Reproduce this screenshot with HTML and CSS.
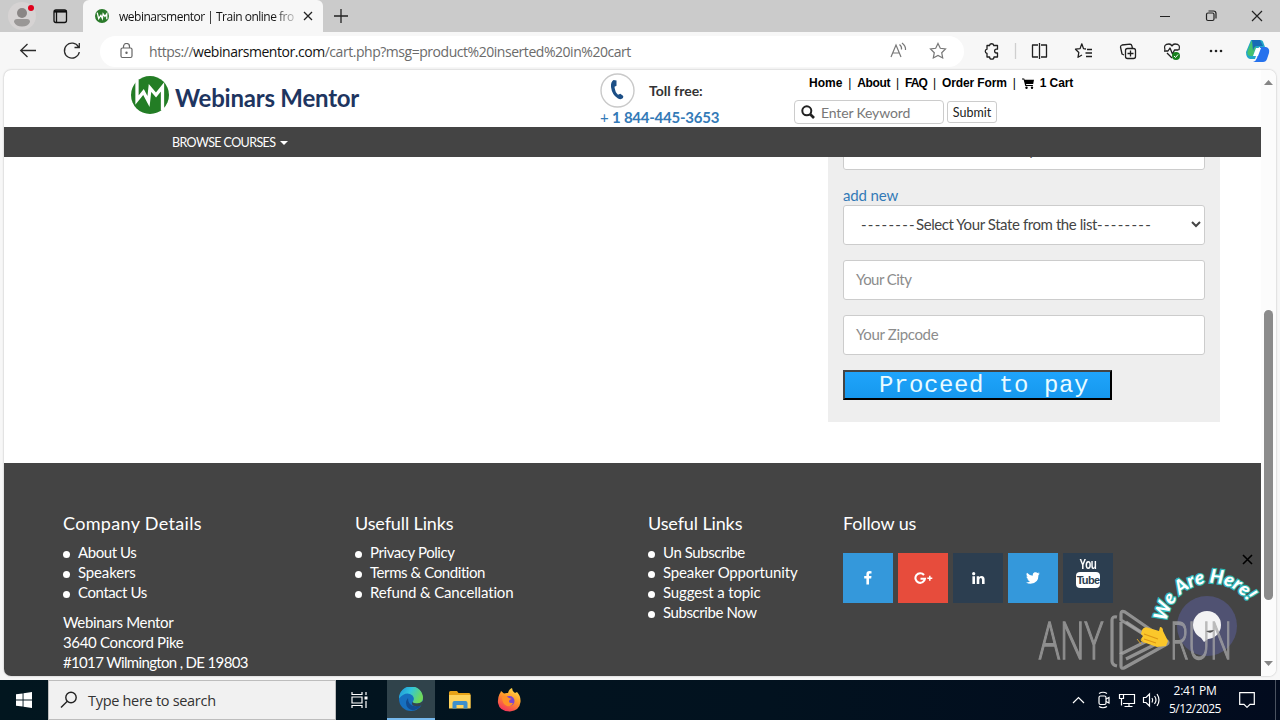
FILE: index.html
```html
<!DOCTYPE html>
<html lang="en">
<head>
<meta charset="utf-8">
<title>webinarsmentor | Train online from home</title>
<link rel="stylesheet" href="styles.css">
</head>
<body>
<div class="screen">
  <div class="titlebar">
    <svg class="tb-left" width="83" height="32" viewBox="0 0 83 32">
      <circle cx="22" cy="16" r="14" fill="#d6d3d3"/>
      <circle cx="22" cy="13" r="5" fill="#8a8685"/><path d="M14 22q0-3 3-3h10q3 0 3 3q-2 4.500-8 4.500t-8-4.500z" fill="#9a9796"/>
      <circle cx="31" cy="8" r="3" fill="#e0001b"/>
      <rect x="54" y="10" width="12.500" height="12.500" rx="2" fill="none" stroke="#111" stroke-width="1.300"/><path d="M54 11.500h12.500" stroke="#111" stroke-width="2.200"/><path d="M56.500 11v11" stroke="#111" stroke-width="1.300"/>
    </svg>
    <div class="tab">
      <svg width="14" height="14" viewBox="0 0 38 38"><circle cx="19" cy="19" r="19" fill="#2a7a2a"/><path d="M6 10l4 16 6-9 4 9 2-13 5 7 5-7v15" fill="none" stroke="#fff" stroke-width="3.500"/></svg>
      <span class="tab-title">webinarsmentor | Train online fro</span>
      <svg class="tab-x" width="10" height="10" viewBox="0 0 10 10"><path d="M1 1l8 8M9 1l-8 8" stroke="#222" stroke-width="1.300"/></svg>
    </div>
    <svg class="plus" width="14" height="14" viewBox="0 0 14 14"><path d="M7 0v14M0 7h14" stroke="#222" stroke-width="1.300"/></svg>
    <svg class="win" width="120" height="32" viewBox="0 0 120 32" fill="none" stroke="#222" stroke-width="1.200">
      <path d="M0 16.500h10M92 11l10 10M102 11l-10 10"/><rect x="46.500" y="13" width="7.500" height="7.500" rx="1.500"/><path d="M48.500 11h5q2.500 0 2.500 2.500v5"/>
    </svg>
  </div>

  <div class="toolbar">
    <svg width="100" height="38" viewBox="0 32 100 38" fill="none" stroke="#2b2b2b" stroke-width="1.300">
      <path d="M36 50.500H21M27.500 44l-6.800 6.500 6.800 6.500"/><path d="M78.500 47a7.500 7.500 0 1 0 .8 5M79.300 43v4.500h-4.800"/>
    </svg>
    <div class="address">
      <svg width="13" height="16" viewBox="0 0 13 16" fill="none" stroke="#666" stroke-width="1.200"><rect x="1" y="5" width="11" height="9.500" rx="1.500"/><path d="M3.500 5V3.500a3 3 0 0 1 6 0V5"/><circle cx="6.500" cy="9.700" r=".6" fill="#666"/></svg>
      <span class="url">https://<b>webinarsmentor.com</b>/cart.php?msg=product%20inserted%20in%20cart</span>
      <svg class="addr-icons" width="60" height="20" viewBox="888 41 60 20" fill="none" stroke="#777" stroke-width="1.200"><path d="M891 57l5-12 5 12M892.800 53h6.400M899.500 44.500q2.500 2 2 5M902 43q4 3 3.500 7"/><path d="M938 43.500l2.300 4.800 5.200.7-3.800 3.700 1 5.300-4.700-2.500-4.700 2.500 1-5.300-3.800-3.700 5.200-.7z"/></svg>
    </div>
    <svg class="tools" width="316" height="38" viewBox="964 32 316 38" fill="none" stroke="#1f1f1f" stroke-width="1.300" stroke-linejoin="round">
      <path d="M987 45.500h2.500a2.200 2.200 0 0 1 4.300 0h3.700v3.700h-1a1.900 1.900 0 0 0 0 3.800h1v4h-3.500a2.200 2.200 0 0 1-4.400 0H987v-3.500a2.200 2.200 0 0 1 0-4.300z"/>
      <path d="M1015.500 43v16" stroke="#cfcfcf"/>
      <path d="M1038 45h-5.500v12h5.500M1041 45h5.500v12h-5.500M1039.500 43v16"/>
      <path d="M1086 49l-2.500-.4-1.700-4.800-1.700 4.800-4.600.6 3.300 3.300-.8 4.800 4-2.300M1087 49.500h5M1085.500 53h6.500M1086 56.500h6"/>
      <path d="M1124 55l-2-1-1.500-7q0-1.500 1.500-2l8-.8q1.500 0 2 2l.3 2"/><rect x="1125.500" y="48.500" width="10" height="10" rx="2"/><path d="M1130.500 50.500v6M1127.500 53.500h6"/>
      <path d="M1165 50q-2-6 4-6 2 0 3 2 1-2 3-2 6 0 4 6M1164 51h4l2-3 2.500 6 2-4h4M1167 53l5 5"/><circle cx="1176" cy="56" r="4" fill="#17801c" stroke="none"/><path d="M1174 56l1.500 1.500 2.500-3" stroke="#fff" stroke-width="1"/>
      <g fill="#222" stroke="none"><circle cx="1211" cy="51" r="1.300"/><circle cx="1216" cy="51" r="1.300"/><circle cx="1221" cy="51" r="1.300"/></g>
      <g stroke="none"><path d="M1251 40h9q3 0 3.500 3l1.500 4h-6l-4 12h-5q-4-1-4-7z" fill="#21a7c9"/><path d="M1248 50l3-8q1-2 3-2h4l-5 16h-3q-4-1-2-6z" fill="#45c16f"/><path d="M1260 47h6q4 1 3 6l-2 6q-1 3-4 3h-10q3-1 4-4z" fill="#2672ed"/><path d="M1252 40h8l3 6h-6q-3 0-4 5z" fill="#176bb6"/><path d="M1256 48h5l-3 8h-5z" fill="#fff"/></g>
    </svg>
  </div>

  <div class="window">
    <div class="page">
      <header class="site-head">
        <div class="brand">
          <svg width="38" height="38" viewBox="0 0 38 38"><circle cx="19" cy="19" r="19" fill="#237d25"/><path d="M6 4v20l6.500-8 5 9.500L19 12l6 7 6.500-8v23" fill="none" stroke="#fff" stroke-width="3.300"/></svg>
          <span class="brand-name">Webinars Mentor</span>
        </div>
        <div class="phone">
          <div class="phone-top">
            <svg width="35" height="35" viewBox="0 0 35 35"><circle cx="17.500" cy="17.500" r="16.500" fill="#fff" stroke="#c9c9c9" stroke-width="1.400"/><path d="M16.500 7.500l-3-.5q-3 2-2.500 7 1 8 7 11.500 3 1.500 5-.5l.3-2-3-2.300-2.300 1q-3-2.500-3.500-8l2-1z" fill="#1c4f86"/></svg>
            <span class="toll">Toll free:</span>
          </div>
          <span class="number">+ <b>1 844-445-3653</b></span>
        </div>
        <div class="head-right">
          <nav class="menu"><a>Home</a><i>|</i><a class="m-about">About</a><i>|</i><a class="m-faq">FAQ</a><i>|</i><a class="m-order">Order Form</a><i>|</i>
            <svg width="12" height="11" viewBox="0 0 12 11"><path d="M0 .5h2.200l.4 1.300H12L11.200 6H4l.3 1.100h6.600v1H3.300L1.600 1.600H0z" fill="#000"/><circle cx="4.500" cy="9.700" r="1.200"/><circle cx="10" cy="9.700" r="1.200"/></svg><a class="m-cart">1 Cart</a></nav>
          <div class="search">
            <div class="search-box"><svg width="14" height="14" viewBox="0 0 14 14" fill="none" stroke="#222" stroke-width="2"><circle cx="5.800" cy="5.800" r="4.500"/><path d="M9 9l4 4" stroke-width="2.600"/></svg><span>Enter Keyword</span></div>
            <div class="submit">Submit</div>
          </div>
        </div>
      </header>
      <div class="navbar"><span>BROWSE COURSES</span><i class="caret"></i></div>
      <main class="main">
        <div class="form">
          <div class="field country"><span>--------Select Your Country from the list--------</span></div>
          <a class="add">add new</a>
          <div class="field select"><span class="dash">--------</span><span class="state">Select Your State from the list</span><span class="dash">--------</span><svg width="10" height="7" viewBox="0 0 10 7"><path d="M1 1l4 4 4-4" fill="none" stroke="#444" stroke-width="2"/></svg></div>
          <div class="field"><span class="city">Your City</span></div>
          <div class="field"><span class="zip">Your Zipcode</span></div>
          <div class="pay">Proceed to pay</div>
        </div>
      </main>
      <footer class="footer">
        <section class="c1"><h4>Company Details</h4>
          <ul><li>About Us</li><li class="loose">Speakers</li><li>Contact Us</li></ul>
          <p>Webinars Mentor<br>3640 Concord Pike<br><span class="addr3">#1017 Wilmington , DE 19803</span></p></section>
        <section class="c2"><h4>Usefull Links</h4>
          <ul><li>Privacy Policy</li><li>Terms &amp; Condition</li><li class="loose">Refund &amp; Cancellation</li></ul></section>
        <section class="c3"><h4>Useful Links</h4>
          <ul><li>Un Subscribe</li><li class="loose">Speaker Opportunity</li><li class="loose">Suggest a topic</li><li>Subscribe Now</li></ul></section>
        <section class="c4"><h4>Follow us</h4>
          <div class="social">
            <div class="sq blue"><svg width="8" height="14" viewBox="0 0 8 14"><path d="M7.500.2v2.300H6q-1 0-1 1V5h2.500l-.3 2.400H5V13.500H2.400V7.400H.2V5h2.200V3.200Q2.400.2 5.500.1z" fill="#fff"/></svg></div>
            <div class="sq red"><svg width="19" height="13" viewBox="0 0 19 13"><path d="M10 3A4.800 4.800 0 1 0 11 6.700H6.500" fill="none" stroke="#fff" stroke-width="2.100"/><path d="M15.800 3.800v5M13.300 6.300h5" stroke="#fff" stroke-width="1.500"/></svg></div>
            <div class="sq navy"><svg width="13" height="12" viewBox="0 0 13 12" fill="#fff"><circle cx="1.700" cy="1.700" r="1.600"/><path d="M.4 4.200H3V12H.4zM4.700 4.200h2.500v1.100Q8 4 9.600 4q3 0 3 3.500V12H10V7.900q0-1.800-1.300-1.800T7.300 8v4H4.700z"/></svg></div>
            <div class="sq blue"><svg width="14" height="12" viewBox="0 0 14 12"><path d="M14 1.500l-1.500 1.600Q12.500 11.500 4.600 11.700 2 11.700 0 10.500q2.500 0 4-1.200-2-.3-2.600-2h1.200Q.5 6.500.4 4.400l1.300.3Q-.3 3 1 .8q2.400 2.700 5.800 3Q6.300 1.200 8.600.3q1.800-.5 3 .7l1.800-.6-1.100 1.500z" fill="#fff"/></svg></div>
            <div class="sq navy yt"><span>You</span><b>Tube</b></div>
          </div></section>
      </footer>
      <svg class="chat" width="232" height="130" viewBox="1029 545 232 130">
        <defs><path id="arc" d="M1166.500 623A45 45 0 0 1 1251.500 609"/></defs>
        <path d="M1243 556l9 9M1252 556l-9 9" stroke="#000" stroke-width="1.600"/>
        <circle cx="1207" cy="627" r="30" fill="#505272"/>
        <circle cx="1207" cy="626" r="14" fill="#f3f3f4"/><path d="M1199 636l5 7 8-6z" fill="#f3f3f4"/>
        <g class="anyrun"><text x="1039" y="660" textLength="64" lengthAdjust="spacingAndGlyphs">ANY</text>
        <text x="1170" y="660" textLength="62" lengthAdjust="spacingAndGlyphs">RUN</text></g>
        <path d="M1206 632q5 4 8-1z" fill="#555"/>
        <g fill="none" stroke="#a5a5a5" stroke-opacity=".8" stroke-width="3.200" stroke-linejoin="round"><path d="M1117 618q-5-1-5 3v41q0 4 5 5"/><path d="M1121 615q0-4 4-2l42 29q2 2 0 3l-43 24q-3 1-3-2v-12l30-15-30-19z"/><path d="M1121 623v32M1126 660l32-16-32-21"/></g>
        <path d="M1142 631q2-4 7-2l10 3 1-4q3 0 3 4l5 10-2 5-9 1-14-5q-3-1-2-3l2-3-2-2z" fill="#fbc72b"/><path d="M1144 635l14 5M1144 640l12 4" stroke="#dc9616" stroke-width="1.200"/><path d="M1137 640l4 5M1141 640l3 4" stroke="#d7a52c"/>
        <text class="we"><textPath href="#arc" textLength="107" lengthAdjust="spacingAndGlyphs">We Are Here!</textPath></text>
      </svg>
    </div>
    <div class="scroll">
      <svg width="15" height="606" viewBox="0 0 15 606" fill="#858585"><path d="M3 15l4.500-5 4.500 5z"/><rect x="3" y="240" width="9" height="290" rx="4.500" fill="#8b8b8b"/><path d="M3 591l4.500 5 4.500-5z"/></svg>
    </div>
  </div>

  <div class="taskbar">
    <div class="start"><svg width="16" height="16" viewBox="0 0 16 16" fill="#fff"><path d="M0 2.300l6.600-.9v6.100H0zM7.500 1.200L16 0v7.500H7.500zM0 8.400h6.600v6.200L0 13.700zM7.500 8.400H16V16l-8.500-1.200z"/></svg></div>
    <div class="find"><svg width="18" height="18" viewBox="0 0 18 18" fill="none" stroke="#222" stroke-width="1.400"><circle cx="11" cy="6.500" r="5.200"/><path d="M7.300 10.300L1 16.500"/></svg><span>Type here to search</span></div>
    <div class="apps">
      <div class="app"><svg width="18" height="16" viewBox="0 0 18 16" fill="none" stroke="#fff" stroke-width="1.200"><path d="M1 0v2.500h10V0M1 16v-2.500h10V16M1 5h10v6H1zM15 0v3M15 9v7"/><path d="M13.500 4.500h3v3h-3z" fill="#fff" stroke="none"/></svg></div>
      <div class="app active"><svg width="24" height="24" viewBox="0 0 24 24"><defs><linearGradient id="eg" x1="0" y1="0" x2="1" y2=".4"><stop offset="0" stop-color="#1c8fd8"/><stop offset=".5" stop-color="#31c5dc"/><stop offset="1" stop-color="#6fd95a"/></linearGradient></defs><circle cx="12" cy="12" r="12" fill="#1670c0"/><path d="M0 11.500A12 12 0 0 1 24 11q0 5-5.500 5.500-5 .3-4.500-2 2-3-.5-6Q7 3.500 0 11.500z" fill="url(#eg)"/><path d="M9 11q-4 5 0 10 4 4 10 .5 2-1.500 3-4-5 3-9 1T9 11z" fill="#124c91"/><path d="M14 14.500q-1 2 4 2 4-.2 5.600-2.500l.5 1.500-1.600 3q-5 1.500-8.500 0-2-2 0-4z" fill="#34454d"/></svg></div>
      <div class="app"><svg width="22" height="20" viewBox="0 0 22 20"><path d="M0 2.500Q0 1 1.500 1H8l1.500 2H20q1.500 0 1.500 1.500V18H0z" fill="#e8a317"/><path d="M0 5h21.500v13.500H0z" fill="#ffd35c"/><path d="M3.500 18.500V13q0-2 2-2h11q2 0 2 2v5.500h-4V15h-7v3.500z" fill="#3d8fcb"/></svg></div>
      <div class="app"><svg width="24" height="24" viewBox="0 0 24 24"><defs><linearGradient id="fx" x1=".8" y1="0" x2=".3" y2="1"><stop offset="0" stop-color="#ffe14d"/><stop offset=".45" stop-color="#ff9a28"/><stop offset="1" stop-color="#f4315d"/></linearGradient></defs><path d="M2.500 6q1-1 1.500-3l3 2.500q2-.8 4-.5 1-4 4-5 0 3 3 5l2-1q4 4 3.500 10-1 8.500-10.500 9.500Q2.500 23.500 1 15q-.5-5 1.500-9z" fill="url(#fx)"/><circle cx="12.500" cy="13" r="5" fill="#7b45cf"/><path d="M5 9q4-2 7 1l3 1q-3 .5-3 2.500t4 1.500q-2 4-6 3-5-2-5-9z" fill="#ff9127"/></svg></div>
    </div>
    <svg class="tray" width="92" height="20" viewBox="1070 690 92 20" fill="none" stroke="#fff" stroke-width="1.200"><path d="M1073 703l5.500-5.500 5.500 5.500"/><rect x="1099" y="696" width="7" height="8.500" rx="1.500"/><path d="M1106 699l3-1.500v5.500l-3-1.500M1099 693.500q4-2.500 8 0M1099 706.500q4 2.500 8 0"/><path d="M1124 694.500h10.500v9H1123M1129 703.500v3M1124.500 706.500h8"/><path d="M1119.500 694.500h4v4h-4zM1121.500 698.500v7"/><path d="M1143.500 697.500h2.500l3.500-3.500v12l-3.500-3.500h-2.500zM1152 698q1.500 2 0 4.500M1154.500 696q3 4 0 8M1157 694q4 6 0 12"/></svg>
    <div class="clock"><span>2:41 PM</span><span class="date">5/12/2025</span></div>
    <svg class="note" width="16" height="16" viewBox="0 0 16 16" fill="none" stroke="#fff" stroke-width="1.200"><path d="M.7.700h14.600v11.600H11l-3 3-3-3H.7z"/></svg>
    <i class="peek"></i>
  </div>
</div>
</body>
</html>
```
FILE: styles.css
```css
* { box-sizing: border-box; }
body { margin: 0; font-family: Lato, "Open Sans", sans-serif; }
svg { display: block; flex: none; }
i { font-style: normal; }
.screen { width: 1280px; height: 720px; overflow: hidden; display: flex; flex-direction: column; background: #f7f7f7; }

.titlebar { height: 32px; flex: none; background: #cbcbcb; display: flex; align-items: center; font-family: "Open Sans", sans-serif; }
.tab { width: 240px; height: 32px; background: #f7f7f7; border-radius: 6px 6px 0 0; display: flex; align-items: center; padding-left: 12px; }
.tab-title { margin-left: 10px; width: 175px; font-size: 12px; letter-spacing: -0.5px; white-space: nowrap; color: #111; -webkit-mask-image: linear-gradient(90deg, #000 88%, rgba(0,0,0,.25)); mask-image: linear-gradient(90deg, #000 88%, rgba(0,0,0,.25)); }
.tab-x { margin-left: 9px; }
.plus { margin-left: 11px; }
.win { margin-left: auto; }

.toolbar { height: 38px; flex: none; display: flex; align-items: center; }
.address { width: 864px; height: 31px; border-radius: 16px; background: #fff; display: flex; align-items: center; padding: 0 16px 0 20px; }
.url { margin-left: 16px; font-family: "Open Sans", sans-serif; font-size: 14px; color: #6b6b6b; white-space: nowrap; letter-spacing: -0.46px; }
.url b { font-weight: 400; color: #111; }
.addr-icons { margin-left: auto; }

.window { width: 1272px; height: 606px; flex: none; margin-left: 4px; display: flex; border-radius: 7px; overflow: hidden; background: #fff; box-shadow: 0 0 2px rgba(0,0,0,.3); }
.page { width: 1257px; height: 606px; position: relative; display: flex; flex-direction: column; overflow: hidden; }
.scroll { width: 15px; background: #fcfcfc; }

.site-head { height: 57px; flex: none; display: flex; }
.brand { margin-left: 127px; margin-top: 6px; width: 469px; display: flex; }
.brand-name { margin-left: 6px; margin-top: 7px; font-size: 24px; line-height: 30px; font-weight: 700; letter-spacing: -.22px; color: #1e3560; white-space: nowrap; }
.phone { width: 194px; padding-top: 3px; }
.phone-top { display: flex; align-items: center; height: 35px; }
.toll { margin-left: 14px; font-size: 14px; font-weight: 700; color: #333; }
.number { display: block; font-size: 15px; line-height: 18px; letter-spacing: -.25px; color: #337ab7; white-space: nowrap; }
.head-right { padding-top: 4px; }
.menu { display: flex; align-items: center; height: 18px; padding-left: 15px; font: 700 12px "Liberation Sans", sans-serif; color: #000; }
.menu i { width: 15px; text-align: center; font-weight: 400; }
.menu a { white-space: nowrap; }
.m-about { letter-spacing: -.4px; }
.m-faq { letter-spacing: -.9px; }
.m-order { letter-spacing: -.12px; }
.m-cart { letter-spacing: -.1px; }
.menu svg { margin-right: 6px; }
.search { display: flex; gap: 3px; align-items: center; margin-top: 8px; }
.search-box { width: 150px; height: 24px; border: 1px solid #ccc; border-radius: 4px; display: flex; align-items: center; padding-left: 6px; gap: 6px; font-size: 14px; letter-spacing: -.15px; color: #777; }
.submit { width: 50px; height: 22px; border: 1px solid #ccc; border-radius: 3px; display: flex; align-items: center; justify-content: center; font-size: 12.500px; color: #222; }
.navbar { height: 30px; flex: none; background: #444; color: #fff; display: flex; align-items: center; padding-left: 168px; font-size: 12.500px; letter-spacing: -.6px; }
.caret { margin-left: 5px; margin-top: 2px; border: 4px solid transparent; border-top-color: #fff; border-bottom: 0; }

.main { height: 306px; flex: none; padding-left: 824px; overflow: hidden; }
.form { width: 392px; height: 265px; background: #eee; padding: 0 15px; display: flex; flex-direction: column; }
.field { height: 40px; flex: none; margin-bottom: 15px; border: 1px solid #ccc; border-radius: 3px; background: #fff; display: flex; align-items: center; padding: 0 12px 2px; font-size: 15px; color: #8c8c8c; white-space: nowrap; }
.country { margin-top: -27px; padding-left: 17px; color: #555; }
.add { height: 20px; line-height: 20px; color: #337ab7; font-size: 15px; letter-spacing: -.15px; }
.select { color: #444; padding: 0 3px 2px 17px; }
.select svg { margin-left: auto; }
.dash { letter-spacing: 1.300px; }
.state { letter-spacing: -.42px; }
.city { letter-spacing: -.55px; }
.zip { letter-spacing: -.35px; }
.pay { width: 269px; height: 30px; border: 2px solid; border-color: #444 #000 #000 #444; background: linear-gradient(#1fa4fb, #1698ee); color: #e9fbff; font: 24px/28px "Liberation Mono", monospace; letter-spacing: .6px; padding-left: 34px; white-space: nowrap; }

.footer { height: 213px; flex: none; background: #444; color: #fff; display: flex; padding: 48px 0 0 59px; font-size: 15px; line-height: 20px; letter-spacing: -.42px; white-space: nowrap; }
.footer h4 { margin: 0 0 6px; font-size: 18px; line-height: 25px; font-weight: 400; letter-spacing: -.12px; }
.footer .c1 h4 { letter-spacing: .33px; }
.footer ul { margin: 0; padding: 0; list-style: none; }
.footer li { display: flex; align-items: center; }
.footer .loose { letter-spacing: -.15px; }
.footer li::before { content: ""; width: 7px; height: 7px; margin: 5px 8px 0 0; border-radius: 50%; background: #fff; }
.footer p { margin: 10px 0 0; letter-spacing: -.33px; }
.addr3 { letter-spacing: -.66px; }
.c1 { width: 292px; } .c2 { width: 293px; } .c3 { width: 195px; }
.social { display: flex; gap: 5px; margin-top: 17px; }
.c4 { padding-top: 0; }
.sq { width: 50px; height: 50px; display: flex; align-items: center; justify-content: center; }
.blue { background: #3498db; } .red { background: #e74c3c; } .navy { background: #2c3e50; }
.yt { flex-direction: column; justify-content: flex-start; padding-top: 4px; font-family: "Liberation Sans", sans-serif; }
.yt span { font-size: 14px; line-height: 15px; font-weight: 700; transform: scaleX(.7); }
.yt b { width: 24px; height: 16px; border-radius: 4px; background: #fff; color: #2c3e50; font-size: 11px; line-height: 16px; text-align: center; letter-spacing: -.7px; }
.chat { position: absolute; left: 1025px; top: 474px; }
.anyrun { font: 300 52px "Open Sans", sans-serif; fill: #a8a8a8; stroke: #a8a8a8; stroke-width: 1.400px; opacity: .75; }
.we { font: italic 900 19px Lato, sans-serif; fill: #fff; stroke: #30b5b5; stroke-width: 2.500px; paint-order: stroke; }

.taskbar { height: 40px; margin-top: 4px; flex: none; background: linear-gradient(90deg, #02161f, #02121f 60%, #020b1e); display: flex; align-items: center; color: #fff; font-family: "Open Sans", sans-serif; }
.start { width: 48px; display: flex; justify-content: center; }
.find { width: 288px; height: 40px; background: #f1f1f1; border: 1px solid #bdbdbd; display: flex; align-items: center; padding-left: 11px; color: #333; font-size: 14.500px; }
.find span { margin-left: 10px; letter-spacing: -.3px; white-space: nowrap; }
.apps { display: flex; }
.app { width: 49px; height: 40px; display: flex; align-items: center; justify-content: center; }
.app:first-child { width: 51px; padding-right: 3px; }
.active { width: 48px; background: #30434b; border-bottom: 2px solid #76b9ed; }
.tray { margin-left: auto; }
.clock { width: 66px; display: flex; flex-direction: column; align-items: center; font-size: 12px; line-height: 18px; letter-spacing: -.3px; }
.date { letter-spacing: -.55px; }
.note { margin: 0 11px; }
.peek { width: 1px; height: 40px; background: #4a5260; margin: 0 4px 0 9px; }
```
